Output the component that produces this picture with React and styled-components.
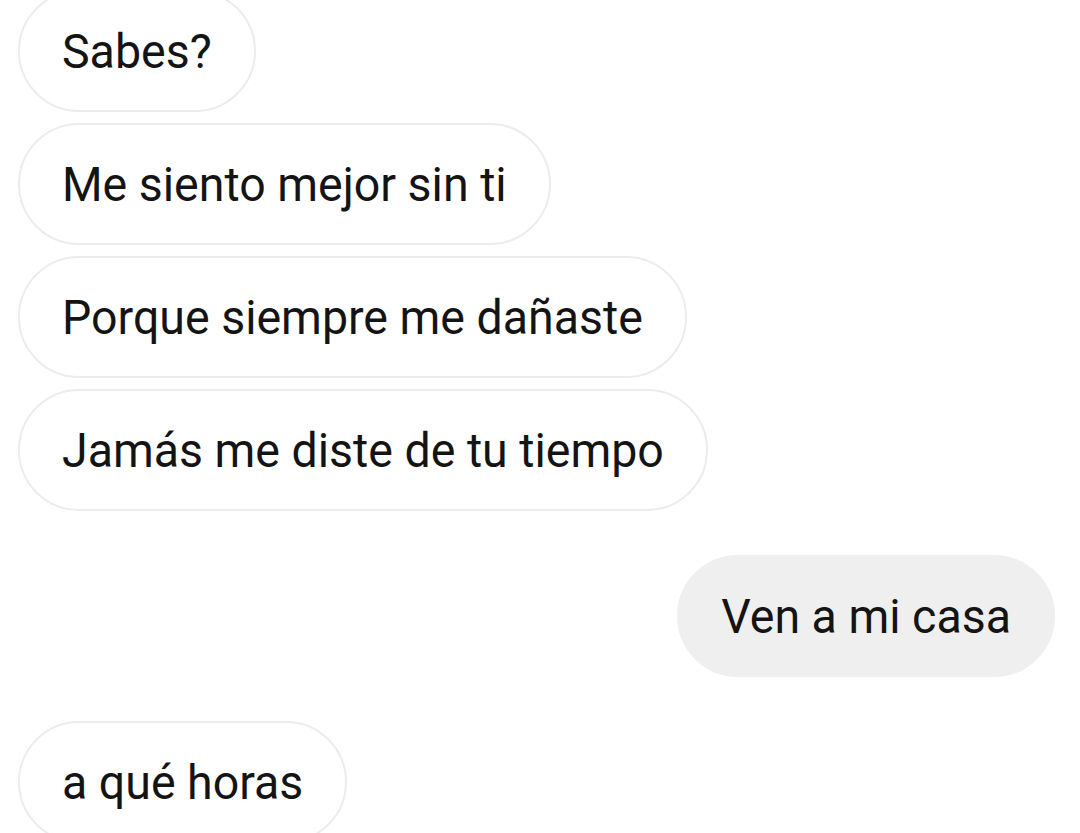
import React from "react";
import styled, { createGlobalStyle } from "styled-components";

const Global = createGlobalStyle`
  html, body {
    margin: 0;
    padding: 0;
    background: #ffffff;
    overflow: hidden;
  }
  body {
    font-family: Roboto, "Noto Sans", "Liberation Sans", sans-serif;
  }
`;

const Screen = styled.div`
  width: 1080px;
  height: 833px;
  overflow: hidden;
  background: #ffffff;
`;

const Thread = styled.div`
  display: flex;
  flex-direction: column;
  margin-top: -10px;
  padding: 0 25px 0 18px;
`;

const Row = styled.div`
  display: flex;
  justify-content: ${(p) => (p.$mine ? "flex-end" : "flex-start")};
  margin-top: ${(p) => p.$gap}px;
`;

const Bubble = styled.div`
  box-sizing: border-box;
  height: 122px;
  display: inline-flex;
  align-items: center;
  padding: 0 42px;
  border-radius: 61px;
  font-size: 46.5px;
  line-height: 1;
  color: #141414;
  white-space: nowrap;
  background: ${(p) => (p.$mine ? "#efefef" : "#ffffff")};
  border: 2px solid ${(p) => (p.$mine ? "#efefef" : "#ececec")};
`;

const Label = styled.span`
  display: inline-block;
  transform: scaleY(1.05);
`;

const messages = [
  { text: "Sabes?", mine: false, gap: 0 },
  { text: "Me siento mejor sin ti", mine: false, gap: 11 },
  { text: "Porque siempre me dañaste", mine: false, gap: 11 },
  { text: "Jamás me diste de tu tiempo", mine: false, gap: 11 },
  { text: "Ven a mi casa", mine: true, gap: 44 },
  { text: "a qué horas", mine: false, gap: 44 },
];

export default function App() {
  return (
    <Screen>
      <Global />
      <Thread>
        {messages.map((m, i) => (
          <Row key={i} $mine={m.mine} $gap={m.gap}>
            <Bubble $mine={m.mine}>
              <Label>{m.text}</Label>
            </Bubble>
          </Row>
        ))}
      </Thread>
    </Screen>
  );
}
